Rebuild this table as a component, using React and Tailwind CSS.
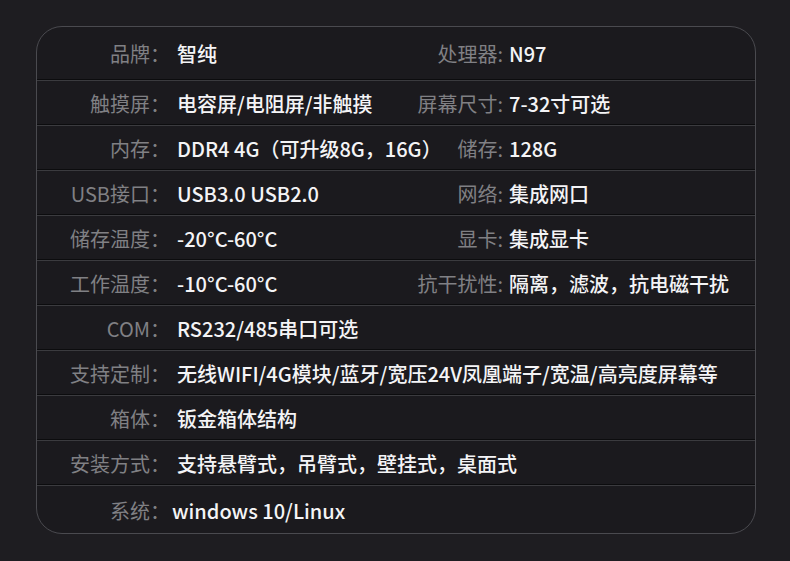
const ROWS = [
  { label: "品牌", value: "智纯", rLabel: "处理器", rValue: "N97" },
  { label: "触摸屏", value: "电容屏/电阻屏/非触摸", rLabel: "屏幕尺寸", rValue: "7-32寸可选" },
  { label: "内存", value: "DDR4 4G（可升级8G，16G）", rLabel: "储存", rValue: "128G" },
  { label: "USB接口", value: "USB3.0 USB2.0", rLabel: "网络", rValue: "集成网口" },
  { label: "储存温度", value: "-20°C-60°C", rLabel: "显卡", rValue: "集成显卡" },
  { label: "工作温度", value: "-10°C-60°C", rLabel: "抗干扰性", rValue: "隔离，滤波，抗电磁干扰" },
  { label: "COM", value: "RS232/485串口可选" },
  { label: "支持定制", value: "无线WIFI/4G模块/蓝牙/宽压24V凤凰端子/宽温/高亮度屏幕等" },
  { label: "箱体", value: "钣金箱体结构" },
  { label: "安装方式", value: "支持悬臂式，吊臂式，壁挂式，桌面式" },
  { label: "系统", value: "windows 10/Linux", tight: true },
];

export default function App() {
  return (
    <div
      className="w-[790px] h-[561px] bg-[#1e1d21] pt-[26px] pl-[36px] overflow-hidden"
      style={{ fontFamily: '"Noto Sans CJK SC", "Noto Sans", sans-serif' }}
    >
      <div className="w-[720px] rounded-[26px] border border-[#4a4a4f] bg-[#1b1a1e] overflow-hidden">
        {ROWS.map((row, i) => (
          <div key={row.label}>
            {i > 0 ? <div className="h-[2px] border-t border-[#0c0c0e] bg-[#3b3b3f]" /> : null}
            <Row row={row} height={i === 0 ? "h-[52px]" : i === ROWS.length - 1 ? "h-[47px]" : "h-[43px]"} />
          </div>
        ))}
      </div>
    </div>
  );
}

function Row({ row, height }) {
  return (
    <div className={`flex items-center pt-[2px] whitespace-nowrap text-[20px] leading-none ${height}`}>
      <span className="w-[133px] shrink-0 text-right text-[#808084]">{row.label}：</span>
      {row.rLabel ? (
        <>
          <span className="ml-[7px] w-[226px] shrink-0 font-medium text-[#f4f4f6]">{row.value}</span>
          <span className="w-[100px] shrink-0 text-right text-[#808084]">{row.rLabel}:</span>
          <span className="ml-[6px] font-medium text-[#f4f4f6]">{row.rValue}</span>
        </>
      ) : (
        <span className={`${row.tight ? "ml-[2px]" : "ml-[7px]"} font-medium text-[#f4f4f6]`}>{row.value}</span>
      )}
    </div>
  );
}
